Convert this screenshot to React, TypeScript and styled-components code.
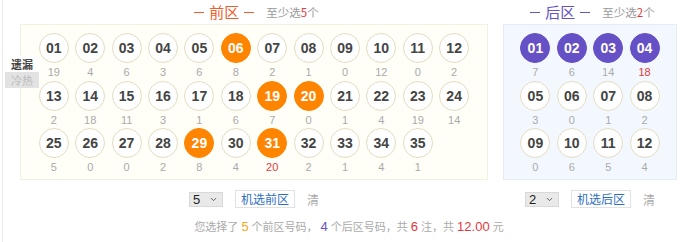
import React from "react";
import styled, { createGlobalStyle, css } from "styled-components";
import { ChevronDown } from "lucide-react";

const GlobalStyle = createGlobalStyle`
  html, body { margin: 0; padding: 0; background: #fff; }
  body { font-family: "Liberation Sans", "Noto Sans CJK SC", sans-serif; }
`;

const CJK = `"Noto Sans CJK SC", "Liberation Sans", sans-serif`;
const ORANGE = "#ff8400";
const PURPLE = "#6650c6";
const RED = "#e4393c";

const Page = styled.div`
  width: 688px;
  height: 242px;
  margin-left: 2px;
  border-left: 1px solid #ececec;
  box-sizing: border-box;
  padding-left: 17px;
`;

const Areas = styled.div`
  display: flex;
  gap: 15px;
  align-items: flex-start;
`;

const Area = styled.div<{ $w: number }>`
  width: ${(p) => p.$w}px;
  display: flex;
  flex-direction: column;
  position: relative;
`;

const Header = styled.div`
  height: 24px;
  display: flex;
  align-items: center;
  justify-content: center;
  font-family: ${CJK};
`;

const Title = styled.span<{ $c: string }>`
  display: inline-flex;
  align-items: center;
  color: ${(p) => p.$c};
  font-size: 15px;
  line-height: 24px;
`;

const Dash = styled.i<{ $c: string }>`
  display: inline-block;
  width: 10px;
  height: 1px;
  background: ${(p) => p.$c};
  margin: 1px 5px 0;
`;

const Hint = styled.span`
  margin-left: 7px;
  font-size: 11.5px;
  color: #999;
  b { font-weight: normal; color: ${RED}; }
`;

const Panel = styled.div<{ $back?: boolean }>`
  height: 156px;
  box-sizing: border-box;
  border: 1px solid ${(p) => (p.$back ? "#e4edf7" : "#f2f0de")};
  background: ${(p) => (p.$back ? "#f3f8fe" : "#fffef7")};
  padding-top: 8px;
  display: grid;
  grid-template-columns: repeat(${(p) => (p.$back ? 4 : 12)}, 36.4px);
  grid-auto-rows: 47.6px;
  justify-content: center;
  align-content: start;
`;

const Cell = styled.div`
  display: flex;
  flex-direction: column;
  align-items: center;
`;

const Ball = styled.div<{ $on?: string }>`
  width: 30px;
  height: 30px;
  box-sizing: border-box;
  border-radius: 50%;
  display: flex;
  align-items: center;
  justify-content: center;
  font-size: 14px;
  font-weight: bold;
  color: #444;
  background: #fff;
  border: 1px solid #e3dcc2;
  ${(p) =>
    p.$on &&
    css`
      background: ${p.$on};
      border-color: ${p.$on};
      color: #fff;
    `}
`;

const Miss = styled.div<{ $hot?: boolean }>`
  height: 17.6px;
  line-height: 18px;
  font-size: 11px;
  color: ${(p) => (p.$hot ? RED : "#aaa")};
`;

const Tabs = styled.div`
  position: absolute;
  left: -15px;
  top: 56px;
  width: 34px;
  font-family: ${CJK};
  font-size: 11px;
`;

const Tab = styled.div<{ $active?: boolean }>`
  height: 16px;
  line-height: 16px;
  text-align: center;
  position: relative;
  color: ${(p) => (p.$active ? "#444" : "#bbb")};
  background: ${(p) => (p.$active ? "#fff" : "#e2e2e2")};
  font-weight: ${(p) => (p.$active ? 600 : "normal")};
  ${(p) =>
    p.$active &&
    css`
      &::after {
        content: "";
        position: absolute;
        right: -4px;
        bottom: -4px;
        border-left: 4px solid #fff;
        border-top: 4px solid transparent;
        border-bottom: 4px solid transparent;
      }
    `}
`;

const Controls = styled.div`
  margin-top: 10px;
  height: 18px;
  display: flex;
  align-items: center;
  justify-content: center;
`;

const Select = styled.div`
  width: 34px;
  height: 15px;
  box-sizing: border-box;
  background: #e9e9e9;
  border: 1px solid #d8d8d8;
  display: flex;
  align-items: center;
  justify-content: space-between;
  padding: 0 4px 0 3px;
  font-size: 13px;
  color: #222;
`;

const Button = styled.div`
  margin-left: 12px;
  height: 18px;
  box-sizing: border-box;
  padding: 0 5px;
  border: 1px solid #e2e2e2;
  background: #fff;
  color: #2e6fc2;
  font-family: ${CJK};
  font-size: 12px;
  line-height: 16px;
`;

const Clear = styled.span`
  margin-left: 12px;
  font-family: ${CJK};
  font-size: 12px;
  color: #aaa;
`;

const Summary = styled.div`
  margin-top: 8px;
  padding-right: 12px;
  text-align: center;
  font-family: ${CJK};
  font-size: 11px;
  line-height: 20px;
  color: #aaa;
`;

const Num = styled.span<{ $c: string }>`
  font-family: "Liberation Sans", sans-serif;
  font-size: 13px;
  color: ${(p) => p.$c};
  margin: 0 3px;
`;

const frontMiss = [
  19, 4, 6, 3, 6, 8, 2, 1, 0, 12, 0, 2,
  2, 18, 11, 3, 1, 6, 7, 0, 1, 4, 19, 14,
  5, 0, 0, 2, 8, 4, 20, 2, 1, 4, 1,
];
const backMiss = [7, 6, 14, 18, 3, 0, 1, 2, 0, 6, 5, 4];
const frontOn = [6, 19, 20, 29, 31];
const backOn = [1, 2, 3, 4];

const pad = (n: number) => String(n).padStart(2, "0");

function Balls({ miss, on, color }: { miss: number[]; on: number[]; color: string }) {
  const max = Math.max(...miss);
  return (
    <>
      {miss.map((m, i) => (
        <Cell key={i}>
          <Ball $on={on.includes(i + 1) ? color : undefined}>{pad(i + 1)}</Ball>
          <Miss $hot={m === max}>{m}</Miss>
        </Cell>
      ))}
    </>
  );
}

export default function App() {
  return (
    <>
      <GlobalStyle />
      <Page>
        <Areas>
          <Area $w={468}>
            <Header>
              <Title $c="#ef5d2c">
                <Dash $c="#ef5d2c" />
                前区
                <Dash $c="#ef5d2c" />
              </Title>
              <Hint>
                至少选<b>5</b>个
              </Hint>
            </Header>
            <Panel>
              <Balls miss={frontMiss} on={frontOn} color={ORANGE} />
            </Panel>
            <Tabs>
              <Tab $active>遗漏</Tab>
              <Tab>冷热</Tab>
            </Tabs>
            <Controls>
              <Select>
                5 <ChevronDown size={9} strokeWidth={2.5} color="#555" />
              </Select>
              <Button>机选前区</Button>
              <Clear>清</Clear>
            </Controls>
          </Area>
          <Area $w={174}>
            <Header>
              <Title $c={PURPLE}>
                <Dash $c={PURPLE} />
                后区
                <Dash $c={PURPLE} />
              </Title>
              <Hint>
                至少选<b>2</b>个
              </Hint>
            </Header>
            <Panel $back>
              <Balls miss={backMiss} on={backOn} color={PURPLE} />
            </Panel>
            <Controls>
              <Select>
                2 <ChevronDown size={9} strokeWidth={2.5} color="#555" />
              </Select>
              <Button>机选后区</Button>
              <Clear>清</Clear>
            </Controls>
          </Area>
        </Areas>
        <Summary>
          您选择了<Num $c="#f5a623">5</Num>个前区号码，
          <Num $c={PURPLE}>4</Num>个后区号码，共<Num $c={RED}>6</Num>注，共
          <Num $c={RED}>12.00</Num>元
        </Summary>
      </Page>
    </>
  );
}
